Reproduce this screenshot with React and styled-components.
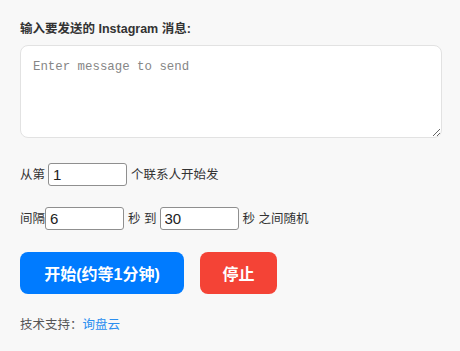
import React, { useState } from 'react';
import styled, { createGlobalStyle } from 'styled-components';

const GlobalStyle = createGlobalStyle`
  body {
    margin: 0;
    background-color: #f8f8f8;
    font-family: "Liberation Sans", "Noto Sans CJK SC", sans-serif;
    color: #333;
  }
`;

const Container = styled.div`
  padding: 21px 18px 0 20px;
  display: flex;
  flex-direction: column;
`;

const Label = styled.label`
  font-size: 12.5px;
  font-weight: bold;
  line-height: 16px;
  margin-bottom: 8px;
`;

const TextArea = styled.textarea`
  box-sizing: border-box;
  width: 422px;
  height: 93px;
  padding: 14px 12px 8px;
  border: 1px solid #e2e2e2;
  border-radius: 8px;
  background: #fff;
  font-family: "Liberation Mono", monospace;
  font-size: 12.4px;
  color: #333;
  outline: none;

  &::placeholder {
    color: #868686;
  }
`;

const Row = styled.div`
  display: flex;
  align-items: center;
  font-size: 12.5px;
  line-height: 16px;
  margin-top: ${(p) => p.top}px;
`;

const Text = styled.span`
  margin: 0 ${(p) => p.right || 0}px 0 ${(p) => p.left || 0}px;
`;

const NumberInput = styled.input`
  box-sizing: border-box;
  width: 79px;
  height: 23px;
  padding: 1px 4px;
  border: 1px solid #8f8f8f;
  border-radius: 3px;
  background: #fff;
  font-family: "Liberation Sans", sans-serif;
  font-size: 15px;
  color: #222;
  outline: none;
`;

const ButtonRow = styled.div`
  display: flex;
  gap: 16px;
  margin-top: 22px;
`;

const ActionButton = styled.button`
  height: 42px;
  width: ${(p) => p.width}px;
  border: none;
  border-radius: 8px;
  background-color: ${(p) => p.color};
  color: #fff;
  font-family: "Liberation Sans", "Noto Sans CJK SC", sans-serif;
  font-size: 16px;
  font-weight: bold;
  cursor: pointer;
`;

const Footer = styled.p`
  margin: 23px 0 0;
  font-size: 12.5px;
  line-height: 16px;
  color: #555;
`;

const Link = styled.a`
  color: #2b8ff0;
  text-decoration: none;
`;

const App = () => {
  const [message, setMessage] = useState('');
  const [start, setStart] = useState('1');
  const [minDelay, setMinDelay] = useState('6');
  const [maxDelay, setMaxDelay] = useState('30');

  return (
    <>
      <GlobalStyle />
      <Container>
        <Label>输入要发送的 Instagram 消息:</Label>
        <TextArea
          placeholder="Enter message to send"
          value={message}
          onChange={(e) => setMessage(e.target.value)}
        />
        <Row top={25}>
          <Text right={3}>从第</Text>
          <NumberInput value={start} onChange={(e) => setStart(e.target.value)} />
          <Text left={4}>个联系人开始发</Text>
        </Row>
        <Row top={21}>
          <Text>间隔</Text>
          <NumberInput value={minDelay} onChange={(e) => setMinDelay(e.target.value)} />
          <Text left={4} right={3}>秒 到</Text>
          <NumberInput value={maxDelay} onChange={(e) => setMaxDelay(e.target.value)} />
          <Text left={4}>秒 之间随机</Text>
        </Row>
        <ButtonRow>
          <ActionButton width={164} color="#007bff">开始(约等1分钟)</ActionButton>
          <ActionButton width={77} color="#f44336">停止</ActionButton>
        </ButtonRow>
        <Footer>
          技术支持：<Link href="#">询盘云</Link>
        </Footer>
      </Container>
    </>
  );
};

export default App;
